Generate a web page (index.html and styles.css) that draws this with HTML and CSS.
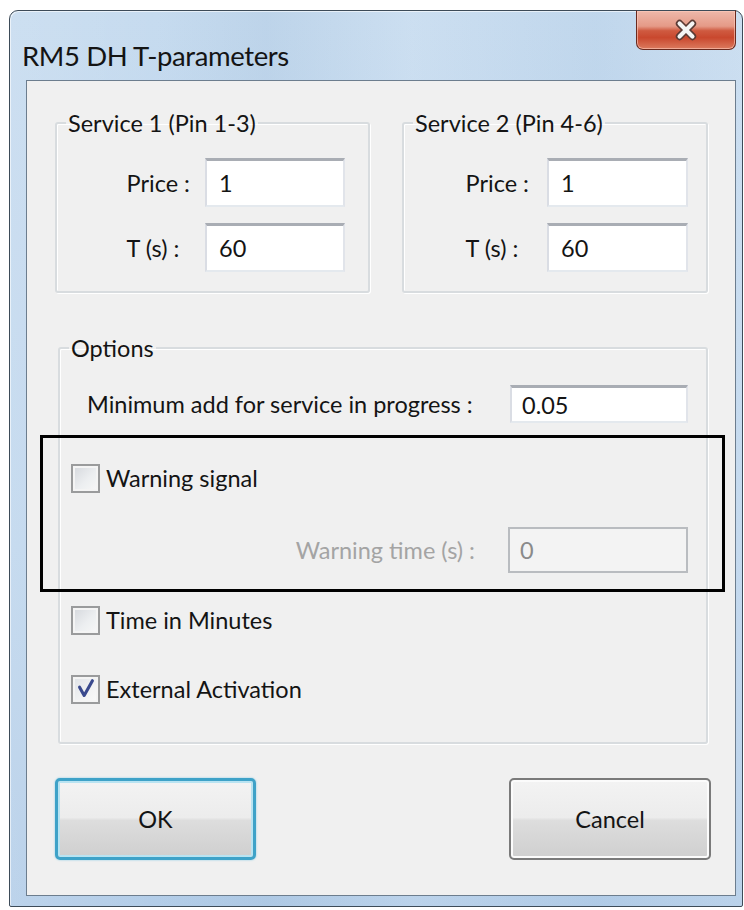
FILE: index.html
```html
<!DOCTYPE html>
<html lang="en">
<head>
<meta charset="utf-8">
<title>RM5 DH T-parameters</title>
<link rel="stylesheet" href="styles.css">
</head>
<body>
<div class="window">
  <div class="titlebar">
    <span class="title">RM5 DH T-parameters</span>
    <button class="close" type="button" aria-label="Close">
      <svg viewBox="0 0 30 26" width="28" height="24" aria-hidden="true">
        <path d="M8 6 L22 20 M22 6 L8 20" stroke="#5a3a34" stroke-width="8" stroke-linecap="round"/>
        <path d="M8 6 L22 20 M22 6 L8 20" stroke="#f4f4f4" stroke-width="4.5" stroke-linecap="round"/>
      </svg>
    </button>
  </div>

  <div class="client">
    <div class="services">
      <fieldset class="group service service-1">
        <legend>Service 1 (Pin 1-3)</legend>
        <div class="fields">
          <label class="field-label">Price :</label>
          <input class="textbox" type="text" value="1">
          <label class="field-label">T (s) :</label>
          <input class="textbox" type="text" value="60">
        </div>
      </fieldset>
      <fieldset class="group service service-2">
        <legend>Service 2 (Pin 4-6)</legend>
        <div class="fields">
          <label class="field-label">Price :</label>
          <input class="textbox" type="text" value="1">
          <label class="field-label">T (s) :</label>
          <input class="textbox" type="text" value="60">
        </div>
      </fieldset>
    </div>

    <fieldset class="group options">
      <legend>Options</legend>
      <div class="min-add">
        <label class="field-label">Minimum add for service in progress :</label>
        <input class="textbox short" type="text" value="0.05">
      </div>

      <div class="highlight">
        <label class="check warn-check"><span class="box"></span>Warning signal</label>
        <div class="warn-time">
          <label class="field-label muted">Warning time (s) :</label>
          <input class="textbox disabled" type="text" value="0" disabled>
        </div>
      </div>

      <label class="check minutes"><span class="box"></span>Time in Minutes</label>
      <label class="check external"><span class="box checked">
        <svg viewBox="0 0 24 24" width="22" height="22" aria-hidden="true">
          <path d="M5 10 L10 19 L19 3" fill="none" stroke="#3a4a8e" stroke-width="3.4" stroke-linejoin="round" stroke-linecap="round"/>
        </svg>
      </span>External Activation</label>
    </fieldset>

    <div class="buttons">
      <button class="btn default" type="button">OK</button>
      <button class="btn" type="button">Cancel</button>
    </div>
  </div>
</div>
</body>
</html>
```

FILE: styles.css
```css
* {
  box-sizing: border-box;
}

html, body {
  margin: 0;
  padding: 0;
  background: #ffffff;
}

body {
  font-family: "Lato", "Open Sans", "Liberation Sans", sans-serif;
  font-size: 23.5px;
  color: #141414;
}

/* Aero window frame */
.window {
  width: 734px;
  margin: 10px 0 0 9px;
  border: 1px solid #3d4b58;
  border-radius: 9px 9px 2px 2px;
  padding: 0 6px 10px 16px;
  background:
    linear-gradient(90deg, rgba(255,255,255,0.12) 0%, rgba(255,255,255,0) 20%, rgba(150,180,210,0.18) 35%, rgba(255,255,255,0.1) 55%, rgba(160,190,220,0.15) 80%, rgba(255,255,255,0.1) 100%),
    linear-gradient(180deg, #c6dbef 0%, #bfd6ed 60%, #b3cde8 100%);
  box-shadow: inset 1px 1px 0 rgba(255,255,255,0.6);
}

.titlebar {
  height: 69px;
  display: flex;
  align-items: flex-start;
  justify-content: space-between;
  margin-left: -4px;
}

.title {
  margin-top: 27px;
  font-size: 27.5px;
  line-height: 36px;
  color: #141414;
  letter-spacing: -0.4px;
}

.close {
  width: 100px;
  height: 40px;
  margin-top: -1px;
  padding: 0;
  border: 1px solid #6a2a1e;
  border-top-color: #3d4b58;
  border-radius: 0 0 7px 7px;
  display: flex;
  align-items: center;
  justify-content: center;
  background: linear-gradient(180deg, #eeb8aa 0%, #e59a87 40%, #cf5a40 52%, #c9482e 70%, #dc7a5e 100%);
  box-shadow: inset 0 0 0 1px rgba(255,205,190,0.6);
}

/* Dialog client area */
.client {
  border: 1px solid #6c7d8e;
  background: #f0f0f0;
  padding: 29px 0 35px 0;
}

.services {
  display: flex;
  gap: 32px;
  margin-left: 28px;
}

.group {
  margin: 0;
  padding: 0;
  min-width: 0;
  border: 2px solid #d8dcdf;
  border-radius: 3px;
  box-shadow: inset 1px 1px 0 #ffffff, 1px 1px 0 #ffffff;
}

.group legend {
  margin-left: 9px;
  padding: 0 2px;
  line-height: 26px;
  color: #141414;
}

.service-1 { width: 315px; }
.service-2 { width: 306px; }

.fields {
  display: grid;
  grid-template-columns: auto 140px;
  justify-content: end;
  align-items: center;
  column-gap: 15px;
  row-gap: 16px;
  padding: 22px 23px 19px 0;
}

.service-2 .fields {
  grid-template-columns: auto 141px;
  padding-right: 18px;
  column-gap: 18px;
}

.field-label {
  white-space: nowrap;
  color: #141414;
}

.field-label.muted {
  color: #a4a4a4;
}

.textbox {
  height: 49px;
  width: 100%;
  margin: 0;
  padding: 0 0 0 12px;
  font: inherit;
  color: #141414;
  background: #ffffff;
  border: 2px solid;
  border-color: #a9adb4 #e1e4ea #e4e9ee #dadde4;
  border-top-width: 3px;
  border-radius: 0;
  outline: none;
}

.textbox.short {
  height: 38px;
  width: 178px;
  padding-left: 10px;
}

.textbox.disabled {
  height: 46px;
  width: 180px;
  padding-left: 10px;
  color: #8a8a8a;
  background: #f3f3f3;
  border: 2px solid #b9bcc0;
}

/* Options group */
.options {
  width: 650px;
  margin-left: 31px;
  margin-top: 42px;
  padding: 24px 0 38px 0;
}

.min-add {
  display: flex;
  align-items: center;
  height: 38px;
  padding-left: 27px;
  padding-right: 18px;
}

.min-add .textbox {
  margin-left: auto;
}

.highlight {
  margin: 12px -19px 0 -20px;
  border: 3px solid #000000;
  padding: 25px 34px 16px 28px;
}

.warn-time {
  display: flex;
  align-items: center;
  justify-content: flex-end;
  gap: 33px;
  margin-top: 34px;
}

/* Checkboxes */
.check {
  display: flex;
  align-items: center;
  gap: 6px;
  height: 30px;
  white-space: nowrap;
}

.minutes {
  margin-top: 13px;
  margin-left: 11px;
}

.external {
  margin-top: 39px;
  margin-left: 11px;
}

.box {
  width: 29px;
  height: 29px;
  flex: none;
  display: flex;
  align-items: center;
  justify-content: center;
  border: 2px solid #9a9b9c;
  background: linear-gradient(135deg, #d4d7dc 0%, #eceef0 55%, #f8f8f8 100%);
  box-shadow: inset 0 0 0 2px #f4f4f4;
}

.box.checked {
  background: linear-gradient(135deg, #dfe2e6 0%, #f2f3f4 60%, #fafafa 100%);
}

/* Dialog buttons */
.buttons {
  display: flex;
  justify-content: space-between;
  margin: 34px 24px 0 28px;
}

.btn {
  width: 202px;
  height: 82px;
  margin: 0;
  font: inherit;
  color: #141414;
  border: 2px solid #7a7a7a;
  border-radius: 5px;
  background: linear-gradient(180deg, #f3f3f3 0%, #ececec 48%, #dddddd 52%, #cfcfcf 100%);
  box-shadow: inset 0 0 0 2px #fbfbfb;
}

.btn.default {
  width: 201px;
  border: 3px solid #3ea2c8;
  box-shadow: inset 0 0 0 2px #b9e3f1, 0 0 2px #7cc6e2;
}
```
